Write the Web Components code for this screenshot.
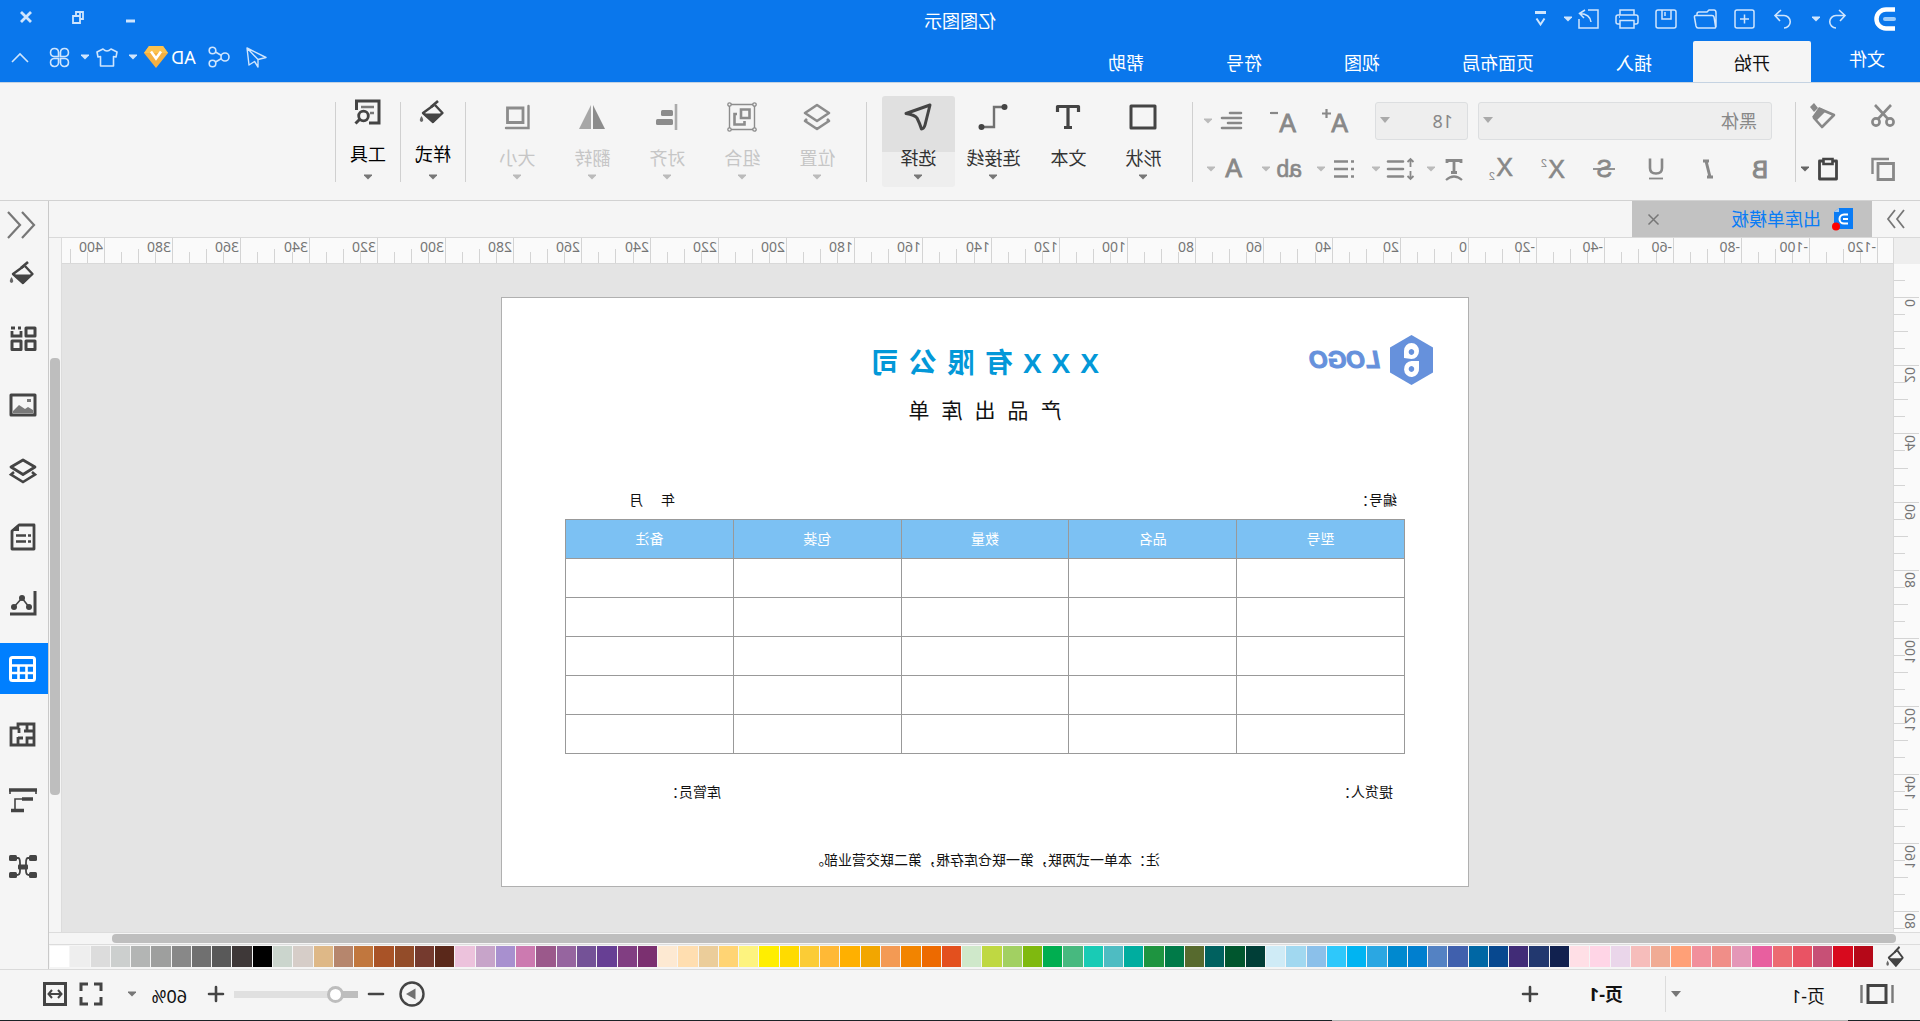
<!DOCTYPE html>
<html lang="zh-CN">
<head>
<meta charset="utf-8">
<title>亿图图示</title>
<style>
html,body{margin:0;height:100%;overflow:hidden;background:#f5f5f5}
body{font-family:"Noto Sans","Noto Sans CJK SC",sans-serif;font-size:18px;color:#222}
edraw-app{transform:scaleX(-1)}
</style>
</head>
<body>
<edraw-app></edraw-app>
<script>
const BASE = `<style>
*{box-sizing:border-box}
button,select{font:inherit;color:inherit;background:none;border:0;margin:0;padding:0;border-radius:0}
button{display:flex;align-items:center;justify-content:center}
</style>`;
function define(name, html, setup){
  const t = document.createElement('template');
  t.innerHTML = BASE + html;
  customElements.define(name, class extends HTMLElement{
    constructor(){
      super();
      this.attachShadow({mode:'open'}).append(t.content.cloneNode(true));
    }
    connectedCallback(){ if(setup) setup.call(this, this.shadowRoot); }
  });
}

/* name: [width, height, markup] */
const L = (d, w=2, x='') => `<path d="${d}" fill="none" stroke="currentColor" stroke-width="${w}" ${x}/>`;
const T = (x, y, s, t, x2='') => `<text x="${x}" y="${y}" font-size="${s}" fill="currentColor" font-family="Liberation Sans, sans-serif" ${x2}>${t}</text>`;
const BUCKET = L('M13 5 L24 13 L14 22 L4.5 13 L12 5',2.4,'stroke-linejoin="round"') + `<path d="M4.5 13.5 H24 L14 23Z" fill="currentColor"/>` + L('M9 1 L16 7',2.6) + `<path d="M25.5 16 q3.5 5 0 6 q-3.5 -1 0 -6" fill="currentColor" opacity=".8"/>`;
const ICONS = {
  logo:[22,24,`<path d="M0 2.5 H9 A9.5 9.5 0 0 1 9 21.5 H0" fill="none" stroke="#fff" stroke-width="4.5"/><path d="M1 12 H10" stroke="#9dccfa" stroke-width="4" stroke-linecap="round"/>`],
  caret:[10,6,`<path d="M1 0.5 H9 V1.5 L5 5.5 L1 1.5Z" fill="currentColor"/>`],
  caretbig:[12,8,`<path d="M1 1 H11 L6 7Z" fill="currentColor"/>`],
  undo:[18,20,L('M7 1 L1 6.5 L6 12 M1 6.5 H10 A6 6 0 0 1 10 19',1.6)],
  redo:[18,20,L('M11 1 L17 6.5 L12 12 M17 6.5 H8 A6 6 0 0 0 8 19',1.6)],
  newf:[21,20,`<rect x="1" y="1" width="19" height="18" rx="2" fill="none" stroke="currentColor" stroke-width="1.5"/>`+L('M10.5 5.5 V14.5 M6 10 H15',1.5)],
  open:[24,20,L('M1 18 V4 Q1 1 3 1 H8 L10 3 H18 Q20 3 20 5 V6 M2 19 Q1 19 1.5 17 L3 8 Q3.4 6.5 5 6.5 H21 Q23 6.5 22.5 8.5 L21 17 Q20.5 19 19 19Z',1.5)],
  save:[22,20,`<rect x="1" y="1" width="20" height="18" rx="2" fill="none" stroke="currentColor" stroke-width="1.5"/>`+L('M6 1 V10 H15 V1 M12 3 V7',1.5)],
  print:[24,20,L('M5 6 V1 H19 V6 M5 15 H3 Q1 15 1 13 V8 Q1 6 3 6 H21 Q23 6 23 8 V13 Q23 15 21 15 H19 M5 11.5 H19 V19 H5Z M19 8 H20',1.5)],
  exp:[21,20,L('M11 1 H1 V19 H20 V10 M8 13 Q9 5 19 4.5 M14 1 L19.5 4.5 L15 9',1.5)],
  more:[12,16,`<path d="M0 1.5 H11" stroke="currentColor" stroke-width="3"/>`+L('M1.5 7.5 L5.5 13.5 L9.5 7.5',2)],
  min:[10,12,`<path d="M0 10 H9" stroke="currentColor" stroke-width="3"/>`],
  restore:[12,13,L('M4 5 V1 H1 V8 H4 M4 5 H11 V12 H4Z M4 1 H8 V5',1.8)],
  close:[12,12,L('M1 1 L11 11 M11 1 L1 11',2.8)],
  send:[21,21,L('M20 1 L1 10.5 L9 12.5 V20 L12.5 14.5 L18 18Z M20 1 L9 12.5',1.4,'stroke-linejoin="round"')],
  share:[22,22,`<g fill="none" stroke="currentColor" stroke-width="1.6"><circle cx="5" cy="11" r="4"/><circle cx="17.5" cy="4.5" r="3.3"/><circle cx="17.5" cy="17.5" r="3.3"/><path d="M8.5 9.5 L14.5 6 M8.5 12.5 L14.5 16"/></g>`],
  vip:[24,22,`<path d="M5 0 H19 L24 7 L12 22 L0 7Z" fill="#f5b041"/><path d="M5 0 H19 L24 7 H0Z" fill="#fcc24f"/><path d="M7 5.5 L12 12.5 L17 5.5" fill="none" stroke="#fff" stroke-width="2.6"/>`],
  shirt:[22,19,L('M7 1 Q11 5 15 1 L21 4 L20 9 L17.5 8.5 V18 H4.5 V8.5 L2 9 L1 4Z',1.6,'stroke-linejoin="round"')],
  apps:[21,21,L('M9.5 9.5 H5 A4 4 0 1 1 9.5 5Z M11.5 9.5 H16 A4 4 0 1 0 11.5 5Z M9.5 11.5 H5 A4 4 0 1 0 9.5 16Z M11.5 11.5 H16 A4 4 0 1 1 11.5 16Z',1.6)],
  up:[18,11,L('M1 10 L9 2 L17 10',1.6)],
  cut:[24,24,`<g fill="none" stroke="currentColor" stroke-width="2.6"><circle cx="5" cy="18" r="3.6"/><circle cx="19" cy="18" r="3.6"/><path d="M4 1 L17 15 M20 1 L7 15"/></g>`],
  brush:[26,26,L('M2 12 L16 6 L22 15 L14 24Z',2.6,'stroke-linejoin="round"')+`<path d="M10 8 L17 4 L24 14 L19 17Z M18 5 L22 0 L26 4 L22 9Z" fill="currentColor"/>`],
  copy:[24,24,L('M6.5 6.5 H22 V22 H6.5Z',2.8).replace('M6.5 6.5 H22 V22 H6.5Z','M1.5 6.5 H17 V22.5 H1.5Z')+L('M6 2 H22.5 V17',2.4)],
  paste:[22,24,L('M6 4 H2.5 V22 H19.5 V4 H16',2.8,'stroke-linejoin="round"')+L('M6.5 2 H15.5 V7 H6.5Z',2.6)],
  aplus:[26,24,T(0,23,25,'A','stroke="currentColor" stroke-width=".8"')+L('M17 4.5 H26 M21.5 0 V9',2.2)],
  aminus:[26,24,T(0,23,25,'A','stroke="currentColor" stroke-width=".8"')+L('M18 4 H26',2.2)],
  align:[22,20,L('M1 2.5 H14 M1 7.5 H21 M1 12.5 H15 M1 17.5 H21',2.6,'stroke-linecap="round"').replace('M1 2.5 H14 M1 7.5 H21 M1 12.5 H15 M1 17.5 H21','M1 2 H12 M1 7 H20 M1 12 H14 M1 17 H20')],
  bold:[24,24,T(4,21,24,'B','stroke="currentColor" stroke-width="1"')],
  ital:[24,24,L('M11 4 H17 M7 20 H13 M14 4 L10 20',3)],
  under:[24,24,L('M6 1.5 V11 Q6 16.5 12 16.5 Q18 16.5 18 11 V1.5',2.6)+L('M5 21.5 H19',1.8)],
  strike:[24,24,T(4,20,23,'S','stroke="currentColor" stroke-width=".8"')+L('M1 12 H23',1.8)],
  sup:[26,24,T(0,21,25,'X','stroke="currentColor" stroke-width=".6"')+T(18,10,11,'2')],
  sub:[26,24,T(0,19,25,'X','stroke="currentColor" stroke-width=".6"')+T(18,23,11,'2')],
  tarc:[24,24,L('M5 6 V3.5 H19 V6 M12 3 V15 M9 15.5 H15',2.8)+L('M4 23 Q12 16 20 23',2.2)],
  lsp:[28,24,L('M4.5 2 V10 M4.5 14 V22 M1.5 5 L4.5 2 L7.5 5 M1.5 19 L4.5 22 L7.5 19',1.8)+L('M12 4.5 H27 M12 12 H27 M12 19.5 H27',2.6,'stroke-linecap="round"')],
  list:[24,24,L('M2 4.5 H5 M2 12 H5 M2 19.5 H5 M8 4.5 H22 M8 12 H22 M8 19.5 H22',2.6)],
  abc:[26,24,T(0,20,23,'ab','stroke="currentColor" stroke-width=".6"')],
  acol:[24,24,T(4,20,25,'A','stroke="currentColor" stroke-width=".8"')],
  rect:[28,26,L('M2 2 H26 V24 H2Z',3,'stroke-linejoin="round"')],
  text:[26,26,L('M2.5 8 V2.5 H23.5 V8 M13 2 V23 M9 23.5 H17',3.2,'stroke-linejoin="round"')],
  conn:[30,26,L('M4 3 H14 V23 H25',2.4,'opacity=".75"')+`<circle cx="3.5" cy="3" r="3" fill="currentColor"/><circle cx="26.5" cy="23" r="3" fill="currentColor"/>`],
  pick:[28,28,L('M2 2 L26 10.5 Q17 12 15 15 Q12 21 10.5 26 Q8 26 7 22Z',3,'stroke-linejoin="round"')],
  pos:[28,28,L('M14 2 L26 10 L14 18 L2 10Z',2.6,'stroke-linejoin="round"')+L('M4 16 L2 18 L14 26 L26 18 L24 16',2.6,'stroke-linejoin="round"')],
  group:[30,30,L('M4 2.5 H26 M4 27.5 H26 M2.5 4 V26 M27.5 4 V26',1.4)+`<g fill="none" stroke="currentColor" stroke-width="1.3"><circle cx="2.5" cy="2.5" r="1.7"/><circle cx="27.5" cy="2.5" r="1.7"/><circle cx="2.5" cy="27.5" r="1.7"/><circle cx="27.5" cy="27.5" r="1.7"/></g>`+L('M7.5 7.5 H16 V16 H7.5Z M20 12 H22.5 V22.5 H12.5 V19',2.6)],
  alignb:[24,28,L('M3 1 V27',2.6,'opacity=".7"')+`<rect x="6" y="7" width="12" height="6" rx="1.5" fill="currentColor"/><rect x="6" y="16" width="17" height="6" rx="1.5" fill="currentColor"/>`],
  flip:[28,26,`<path d="M1 25 L13 1 V25Z" fill="currentColor"/><path d="M27 25 L15 1 V25Z" fill="currentColor" opacity=".75"/>`],
  size:[28,26,L('M8 4 H23.5 V18.5 H8Z',2.8)+L('M2.5 2 V24 H25',2.4,'stroke-linecap="round"')],
  bucket:[28,24,BUCKET],
  bucketsmall:[20,22,`<g transform="scale(.72 .9)">${BUCKET}</g>`],
  tools:[28,26,L('M25.5 11 V2 H3 V24 H13 ',3)+L('M8 8 H21 M8 14 H12',2.4,'opacity=".7"')+L('M22 20 L26.5 24.5',3)+`<circle cx="18.5" cy="17" r="4.8" fill="none" stroke="currentColor" stroke-width="2.8"/>`],
  right2:[20,20,L('M2 1 L9 10 L2 19 M11 1 L18 10 L11 19',1.8)],
  left2:[30,30,L('M14 2 L2 15 L14 28 M28 2 L16 15 L28 28',2.2)],
  x:[11,11,L('M0.5 0.5 L10.5 10.5 M10.5 0.5 L0.5 10.5',1.5)],
  doc:[22,22,`<path d="M1 0 H15 L20 4 V21 H1Z" fill="#0a7cf5"/><path d="M15 0 L20 4 H15Z" fill="#a9cdf3"/><path d="M6 6.5 H10 A4 4 0 0 1 10 15.5 H6 M6 11 H11" fill="none" stroke="#fff" stroke-width="2"/><circle cx="18" cy="18.5" r="4" fill="#f00"/>`],
  s_apps:[28,26,L('M2 2 H11 V10 H2Z M2 15 H11 V23.5 H2Z M16 15 H25 V23.5 H16Z',3,'stroke-linejoin="round"')+L('M16 5 V10 H25 V5 M16 2 H19 M22 2 H26',2.8)],
  s_pic:[28,24,L('M2 2 H26 V22 H2Z',3,'stroke-linejoin="round"')+`<path d="M4 20 V17 L9 14 L12 16 L18 12 L24 18 V20Z" fill="currentColor" opacity=".7"/><rect x="6" y="6" width="4" height="3" fill="currentColor" opacity=".7"/>`],
  s_layers:[28,26,L('M14 2 L26 9 L14 16.5 L2 9Z',2.8,'stroke-linejoin="round"')+L('M5 14 L2 16.5 L14 24 L26 16.5 L23 14',2.6)],
  s_doc:[26,28,L('M2 2 H17 L24 8 V26 H2Z',2.8,'stroke-linejoin="round"')+L('M5 12.5 H8 M10 12.5 H20 M5 18.5 H8 M10 18.5 H20',2.6)+`<path d="M17 1 V8 H25Z" fill="currentColor"/>`],
  s_chart:[28,26,L('M2 1 V24 H27',3)+L('M8 17 L15 8 L23 17',1.6)+`<g fill="currentColor"><circle cx="8" cy="17" r="3"/><circle cx="15" cy="8" r="3"/><circle cx="23" cy="17" r="3"/></g>`],
  s_table:[27,26,`<rect x="1.5" y="1.5" width="24" height="23" rx="2" fill="none" stroke="currentColor" stroke-width="3"/>`+L('M1 9.5 H26 M1 17 H26 M9.5 10 V25 M17.5 10 V25',2.6)],
  s_floor:[27,25,L('M2 2 H18 V6 H25 V23 H2Z M2 9 H9 M2 16 H9 V23 M9 2 V9 H12 M17 6 V11 M13 16 H18 M18 15 V23',2.8)],
  s_gantt:[28,25,L('M0 2 H28 M4 11 H15 M13 22.5 H26',3.6)+L('M15 11 H22 V22 M1 2 V6 M27 2 V6',1.6)],
  s_mind:[28,24,L('M6 3 H9 Q11 3 11 8 V16 Q11 20 8 20 H5 M22 3 H19 Q17 3 17 8 V16 Q17 20 20 20 H23',1.8)+`<g fill="currentColor"><rect y="0" width="8" height="6" rx="1.5"/><rect x="20" width="8" height="6" rx="1.5"/><rect y="17" width="8" height="6" rx="1.5"/><rect x="20" y="17" width="8" height="6" rx="1.5"/><rect x="9" y="9.5" width="10" height="5" rx="1"/></g>`],
  view:[34,20,L('M8 1.5 H26 V18.5 H8Z',3)+L('M1.5 1 V19 M32.5 1 V19',2.4,'opacity=".7"')],
  plus:[16,16,L('M8 1 V15 M1 8 H15',2.6,'stroke-linecap="round"')],
  minus:[16,16,L('M1 8 H15',2.6,'stroke-linecap="round"')],
  play:[26,26,`<circle cx="13" cy="13" r="11.5" fill="none" stroke="currentColor" stroke-width="2.4"/><path d="M9.5 7.5 L19 13 L9.5 18.5Z" fill="currentColor" opacity=".75"/>`],
  fit:[24,24,L('M2 9 V2 H9 M15 2 H22 V9 M22 15 V22 H15 M9 22 H2 V15',3)],
  width:[24,24,L('M1.5 1.5 H22.5 V22.5 H1.5Z',3)+L('M6 12 H18 M9 8 L5.5 12 L9 16 M15 8 L18.5 12 L15 16',2)],
  hex:[43,50,`<path d="M21.5 0 L43 12.5 V37.5 L21.5 50 L0 37.5 V12.5Z" fill="#6691dc"/><path fill="#fff" fill-rule="evenodd" d="M29 23 V16 A7.5 8 0 1 0 21.5 24 Z M21.5 14 a2.8 3 0 1 0 .1 0Z M14 26 V33 A7.5 8 0 1 0 21.5 26Z M21.5 31 a2.8 3 0 1 0 .1 0Z"/>`]
};

define('ui-icon', '', function(root){
  const [w,h,m] = ICONS[this.getAttribute('name')];
  root.innerHTML = `<style>:host{display:flex;flex:none}svg{display:block;overflow:visible}</style><svg width="${w}" height="${h}" viewBox="0 0 ${w} ${h}" aria-hidden="true">${m}</svg>`;
});

const ib = (icon, label, cls='') => `<button type="button" class="${cls}" aria-label="${label}"><ui-icon name="${icon}"></ui-icon></button>`;

define('app-header', `<style>
:host{display:flex;flex-direction:column;background:#0a77ec;color:#cfe5fd;border-bottom:1px solid #c5d3e2;height:83px;flex:none}
.top{display:grid;grid-template-columns:1fr auto 1fr;height:37px;align-items:center}
.quick{display:flex;align-items:center;padding-left:25px}
.quick .u{width:30px;margin-left:21px}.quick .c{width:12px}
.files{display:flex;gap:10px;margin-left:12px}.files button{width:29px}
.quick .m{width:13px;margin-left:15px}
h1{font-size:18px;line-height:24px;font-weight:400;color:#fff;margin:4px 0 0}
.win{display:flex;justify-content:flex-end;padding-bottom:3px}.win button{width:52px;height:32px}
.bar{display:flex;justify-content:space-between;height:45px}
nav{display:flex;align-items:flex-end}
nav button{height:41px;padding:0 41px;color:#fff;white-space:nowrap}
nav .file{padding:0 38px 7px 35px}
nav .on{background:#f5f5f5;color:#111;height:41px;border-radius:2px 2px 0 0}
.tools{display:flex;align-items:center;padding:0 11px 5px 0}
.tools button{flex:none}
.tools .ad{color:#fff;margin-left:12px;gap:3px}
.g16{margin-left:16px}.g6{margin-left:6px}.g10{margin-left:10px}.g20{margin-left:20px}
</style>
<div class="top">
 <div class="quick"><ui-icon name="logo"></ui-icon>${ib('undo','撤销','u')}${ib('caret','撤销列表','c')}
  <div class="files">${ib('redo','恢复')}${ib('newf','新建')}${ib('open','打开')}${ib('save','保存')}${ib('print','打印')}${ib('exp','导出')}</div>${ib('caret','导出列表','c')}${ib('more','自定义','m')}</div>
 <h1>亿图图示</h1>
 <div class="win">${ib('min','最小化')}${ib('restore','还原')}${ib('close','关闭')}</div>
</div>
<div class="bar">
 <nav><button type="button" class="file">文件</button><button type="button" class="on">开始</button><button type="button">插入</button><button type="button">页面布局</button><button type="button">视图</button><button type="button">符号</button><button type="button">帮助</button></nav>
 <div class="tools">${ib('send','发送')}${ib('share','分享','g16')}<button type="button" class="ad">AD<ui-icon name="vip"></ui-icon></button>${ib('caret','账户列表','g6')}${ib('shirt','主题','g10')}${ib('caret','主题列表','g6')}${ib('apps','应用','g10')}${ib('up','收起','g20')}</div>
</div>`);

define('big-button', `<style>
:host{display:block;width:73px;flex:none;color:#444}
button{flex-direction:column;justify-content:flex-start;width:100%;height:91px;padding-top:5px}
.i{height:32px;display:flex;align-items:center}
.l{line-height:24px;margin-top:13px;color:#333;white-space:nowrap}
.c{margin-top:4px;color:#777}
:host([active]) button{background:linear-gradient(#e0e0e0 56px,#eee 56px);border-radius:3px}
:host([off]){color:#8c8c8c}:host([off]) .l{color:#c6c6c6}:host([off]) .c{color:#bbb}
:host([nocaret]) .c{visibility:hidden}
:host([high]){width:64px}:host([high]) button{padding-top:0}:host([high]) .l{color:#000;margin-top:14px}:host([high]) .c{margin-top:8px}
</style><button type="button"><span class="i"></span><span class="l"><slot></slot></span><ui-icon class="c" name="caret"></ui-icon></button>`, function(root){
  root.querySelector('.i').innerHTML = `<ui-icon name="${this.getAttribute('icon')}"></ui-icon>`;
});

define('drop-select', `<style>
:host{display:block;position:relative;color:#888}
select{appearance:none;width:100%;height:38px;padding:0 14px;background:#eee;border:1px solid #dcdee0;border-radius:3px;opacity:1}
ui-icon{position:absolute;right:4px;top:14px;color:#aaa;pointer-events:none}
</style><select></select><ui-icon name="caretbig"></ui-icon>`, function(root){
  const s = root.querySelector('select');
  s.setAttribute('aria-label', this.getAttribute('label'));
  s.add(new Option(this.getAttribute('value')));
});

define('ribbon-bar', `<style>
:host{display:flex;height:118px;flex:none;background:#f5f5f5;border-bottom:1px solid #d2d2d2;color:#888}
.sep{width:1px;height:80px;margin-top:19px;background:#d0d0d0;flex:none}
.clip{display:flex;flex-direction:column;width:124px;padding:19px 0 0 25px;flex:none}
.row{display:flex;align-items:center}
.clip .r1{height:28px;gap:35px}.clip .r2{height:30px;margin-top:24px}.clip .r2 .p{margin-left:32px;color:#444}.clip .r2 .c{margin-left:7px;color:#666}
.font{padding:19px 10px 0 23px;flex:none}
.font .r1{height:38px}.font .r2{height:30px;margin-top:14px}
.f{width:294px}.s{width:93px;margin-left:10px}
.w24{width:24px}.c{width:10px;color:#bbb}.w28{width:28px}
.m28{margin-left:28px}.m22{margin-left:22px}.m15{margin-left:15px}.m11{margin-left:11px}.m6{margin-left:6px}
.big{display:flex;gap:2px;padding:13px 15px 0 12px;flex:none}
.one{padding-top:13px;flex:none}
</style>
<div class="clip"><div class="row r1">${ib('cut','剪切')}${ib('brush','格式刷')}</div><div class="row r2">${ib('copy','复制')}${ib('paste','粘贴','p')}${ib('caret','粘贴列表','c')}</div></div>
<div class="sep"></div>
<div class="font">
 <div class="row r1"><drop-select class="f" label="字体" value="黑体"></drop-select><drop-select class="s" label="字号" value="18"></drop-select>${ib('aplus','增大字号','w24 m28')}${ib('aminus','减小字号','w24 m28')}${ib('align','对齐','w24 m28')}${ib('caret','对齐列表','c m6')}</div>
 <div class="row r2">${ib('bold','加粗','w24')}${ib('ital','斜体','w24 m28')}${ib('under','下划线','w24 m28')}${ib('strike','删除线','w24 m28')}${ib('sup','上标','w24 m28')}${ib('sub','下标','w24 m28')}${ib('tarc','文本路径','w24 m22')}${ib('caret','路径列表','c m6')}${ib('lsp','行距','w28 m11')}${ib('caret','行距列表','c m6')}${ib('list','项目符号','w24 m15')}${ib('caret','符号列表','c m6')}${ib('abc','突出显示','w24 m15')}${ib('caret','显示列表','c m6')}${ib('acol','字体颜色','w24 m15')}${ib('caret','颜色列表','c m6')}</div>
</div>
<div class="sep"></div>
<div class="big"><big-button icon="rect">形状</big-button><big-button icon="text" nocaret>文本</big-button><big-button icon="conn">连接线</big-button><big-button icon="pick" active>选择</big-button></div>
<div class="sep"></div>
<div class="big"><big-button icon="pos" off>位置</big-button><big-button icon="group" off>组合</big-button><big-button icon="alignb" off>对齐</big-button><big-button icon="flip" off>翻转</big-button><big-button icon="size" off>大小</big-button></div>
<div class="sep"></div>
<div class="one"><big-button icon="bucket" high>样式</big-button></div>
<div class="sep"></div>
<div class="one"><big-button icon="tools" high>工具</big-button></div>
<div class="sep"></div>`);

define('doc-tabs', `<style>
:host{display:flex;height:37px;flex:none;border-bottom:1px solid #d9d9d9;background:#f5f5f5}
.m{width:48px;color:#777}
.tab{display:flex;align-items:center;width:240px;background:#c2c2c2;padding:0 16px 0 18px;color:#0a7cf5}
.tab span{flex:1;margin-left:11px;line-height:24px}
.tab button{color:#777;width:12px;height:20px}
</style>${ib('right2','展开','m')}<div class="tab"><ui-icon name="doc"></ui-icon><span>出库单模板</span>${ib('x','关闭')}</div>`);

/* Ruler: 3.41 px per millimetre at 60% zoom. */
const SCALE = 3.41;
function ruler(horizontal){
  return function(root){
    const origin = horizontal ? 424 : 33, from = horizontal ? -120 : -5, to = horizontal ? 410 : 185;
    let out = '';
    for(let v = from; v <= to; v += 5){
      const p = Math.round(origin + v*SCALE), major = v % 20 === 0, len = major ? 25 : v % 10 === 0 ? 14 : 11;
      out += horizontal
        ? `<path d="M${p + .5} 25 V${25-len}"/>`
        : `<path d="M26 ${p + .5} H${26-len}"/>`;
      if(major) out += horizontal
        ? `<text x="${p+2}" y="14">${v}</text>`
        : `<text transform="translate(15 ${p+2}) rotate(-90)" text-anchor="end">${v}</text>`;
    }
    root.querySelector('svg').innerHTML = out;
  };
}
const RULER_CSS = `svg{display:block;width:100%;height:100%;overflow:hidden}path{stroke:#d4d4d4}text{font-size:14px;fill:#757575;font-family:"Noto Sans",sans-serif}`;
define('h-ruler', `<style>:host{display:block;height:26px;flex:1;min-width:0;background:#fafafa;border-bottom:1px solid #d9d9d9}${RULER_CSS}</style><svg></svg>`, ruler(true));
define('v-ruler', `<style>:host{display:block;width:27px;flex:none;min-height:0;background:#fafafa;border-right:1px solid #d9d9d9;overflow:hidden}${RULER_CSS}</style><svg></svg>`, ruler(false));

define('outbound-form', `<style>
:host{display:flex;flex-direction:column;width:968px;background:#fff;border:1px solid #b0b0b0;padding:37px 63px 16px;color:#111;font-size:14px;line-height:20px}
header{display:grid;grid-template-columns:1fr auto 1fr;align-items:start;margin:0 -28px}
.logo{display:flex;align-items:center;gap:10px;color:#6691dc;font:italic bold 24px/50px "Liberation Sans",sans-serif;-webkit-text-stroke:1px #6691dc}
.t{text-align:center;padding-top:9px}
h2{margin:0;font:bold 28px/40px "Liberation Sans","Noto Sans CJK SC",sans-serif;letter-spacing:10px;padding-left:10px;color:#0398d8}
h3{margin:10px 0 0;font-size:21px;line-height:32px;font-weight:400;letter-spacing:12px;padding-left:12px}
.row{display:flex;justify-content:space-between}
.meta{margin:64px 64px 9px 8px}.date{display:flex;gap:18px}
table{border-collapse:collapse;table-layout:fixed;width:100%;height:233px}
tr{height:39px}
th,td{border:1px solid #999;padding:0}
th{background:#7cc1f3;color:#fff;font-weight:400}
.sign{margin:28px 100px 0 12px}
p{margin:48px 0 0;text-align:center}
</style>
<header><div class="logo"><ui-icon name="hex"></ui-icon><span>LOGO</span></div><div class="t"><h2>XXX有限公司</h2><h3>产品出库单</h3></div></header>
<div class="row meta"><span>编号：</span><span class="date"><span>年</span><span>月</span></span></div>
<table><tbody><tr><th>型号</th><th>品名</th><th>数量</th><th>包装</th><th>备注</th></tr>${'<tr><td></td><td></td><td></td><td></td><td></td></tr>'.repeat(5)}</tbody></table>
<div class="row sign"><span>提货人：</span><span>库管员：</span></div>
<p>注：本单一式两联，第一联仓库存根，第二联交营业部。</p>`);

define('side-panel', `<style>
:host{display:flex;flex-direction:column;align-items:stretch;width:49px;flex:none;border-left:1px solid #c9c9c9;background:#f5f5f5;color:#444}
button{height:51px;padding-left:2px;margin-bottom:15px}
.m{height:38px;margin:5px 0 3px;color:#777;padding:0 0 0 6px}
.on{background:#007fff;color:#fff}
</style>${ib('left2','折叠','m')}${ib('bucket','填充')}${ib('s_apps','符号库')}${ib('s_pic','图片')}${ib('s_layers','图层')}${ib('s_doc','页面')}${ib('s_chart','图表')}${ib('s_table','表格','on')}${ib('s_floor','平面图')}${ib('s_gantt','甘特图')}${ib('s_mind','思维导图')}`);

define('color-strip', `<style>
:host{display:flex;height:23px;flex:none;background:#f5f5f5;padding:0 1px 2px 0;color:#444}
.b{width:47px}
.s{display:flex;flex:1;gap:1px}
.s button{flex:1}
</style>${ib('bucketsmall','填充颜色','b')}<div class="s"></div>`, function(root){
  const colors = 'b50818 d80a1e c75076 e95364 ec6b72 e85f9f e497b7 f08e88 f1909c ffa077 f0ab94 f6bdbb ead6ea ffd5e6 ffdfe6 11214f 22386f 412c77 07488f 0067a4 4060ad 5482c3 007fcf 0089cf 2ba7e2 00b4f2 2ec8fb 8bc0ea a1d8f0 cfebf6 003e37 00562e 00615f 576a2e 007a48 1e9440 00ad9f 4ebcc2 19cbb5 47b97f 00ae50 7fb90f a2d062 bfd842 cfe8ca e3501e ed6a00 f28400 f39a54 f2a600 ffb000 ffb936 fbcc36 ffdb00 ffee00 fdf37f ffd474 ebcd9a ffdeb0 fde9d2 7b3070 813e82 673f94 745297 96659f 9b598b cc7ab0 a890cf c7a4c9 ecc2dc 5a281a 753a2e 934c29 a95327 c1773e b6866d deb887 d6cdc8 cbd5cd 000000 3e3838 595959 707070 888888 9e9f9e b3b5b4 cccfce dcdcdc eeeeee ffffff'.split(' ');
  root.querySelector('.s').innerHTML = colors.map(c => `<button type="button" aria-label="#${c}" style="background:#${c}"></button>`).join('');
});

define('status-bar', `<style>
:host{display:flex;align-items:center;height:52px;flex:none;background:linear-gradient(90deg,#1a2226 72px,#b5b5b5 72px 588px,#1a2226 588px) bottom/100% 1px no-repeat,#f5f5f5;border-top:1px solid #dadada;color:#444;padding:0 43px 3px 26px}
span,strong,output{color:#111;line-height:24px;margin-top:3px;white-space:nowrap}
.view{width:34px}.pg{margin-left:35px;width:143px}
.c{color:#777}
.d{width:1px;height:36px;background:#dcdcdc;margin:0 42px 0 4px}
strong{margin-top:0}.add{margin-left:51px}
.z{display:flex;align-items:center;margin-left:auto}
input{appearance:none;width:124px;height:18px;margin:0 10px;background:linear-gradient(90deg,#bdbdbd 22px,#e0e0e0 22px) center/100% 7px no-repeat;border-radius:4px}
input::-webkit-slider-thumb{appearance:none;width:17px;height:17px;border-radius:50%;background:#fff;border:3px solid #bdbdbd}
.mi{margin-left:15px}output{margin-left:21px;width:50px}.f{margin-left:24px}.w{margin-left:12px}
</style>
${ib('view','视图','view')}<span class="pg">页-1</span>${ib('caretbig','页面列表','c')}<div class="d"></div><strong>页-1</strong>${ib('plus','添加页面','add')}
<div class="z">${ib('play','播放')}${ib('minus','缩小','mi')}<input type="range" min="0" max="100" value="13" aria-label="缩放">${ib('plus','放大')}<output>60%</output>${ib('caret','缩放列表','c')}${ib('fit','适合页面','f')}${ib('width','适合宽度','w')}</div>`);

define('edraw-app', `<style>
:host{display:flex;flex-direction:column;height:100vh;background:#f5f5f5}
.main{display:flex;flex:1;min-height:0}
.work{display:flex;flex-direction:column;flex:1;min-width:0}
.mid{display:flex;flex:1;min-height:0}
.edit{display:flex;flex-direction:column;flex:1;min-width:0}
.rr{display:flex;flex:none}
.corner{width:27px;background:#eee;border-right:1px solid #d9d9d9;flex:none}
.cv{display:flex;flex:1;min-height:0}
.canvas{flex:1;min-width:0;overflow:hidden;background:#e4e4e4;padding:33px 0 0 424px}
.vs{width:13px;flex:none;border-left:1px solid #dcdcdc;padding:120px 1px 0}
.vs i{display:block;height:437px;border-radius:4px;background:#bebebe}
.hs{height:13px;flex:none;border:solid #dcdcdc;border-width:1px 0;margin-bottom:1px;padding:1px 63px 1px 24px}
.hs i{display:block;height:9px;border-radius:4px;background:#bebebe}
</style>
<app-header></app-header><ribbon-bar></ribbon-bar>
<div class="main">
 <div class="work"><doc-tabs></doc-tabs>
  <div class="mid"><div class="edit"><div class="rr"><div class="corner"></div><h-ruler></h-ruler></div><div class="cv"><v-ruler></v-ruler><div class="canvas"><outbound-form></outbound-form></div></div></div><div class="vs"><i></i></div></div>
  <div class="hs"><i></i></div>
  <color-strip></color-strip>
 </div>
 <side-panel></side-panel>
</div>
<status-bar></status-bar>`);
</script>
</body>
</html>
